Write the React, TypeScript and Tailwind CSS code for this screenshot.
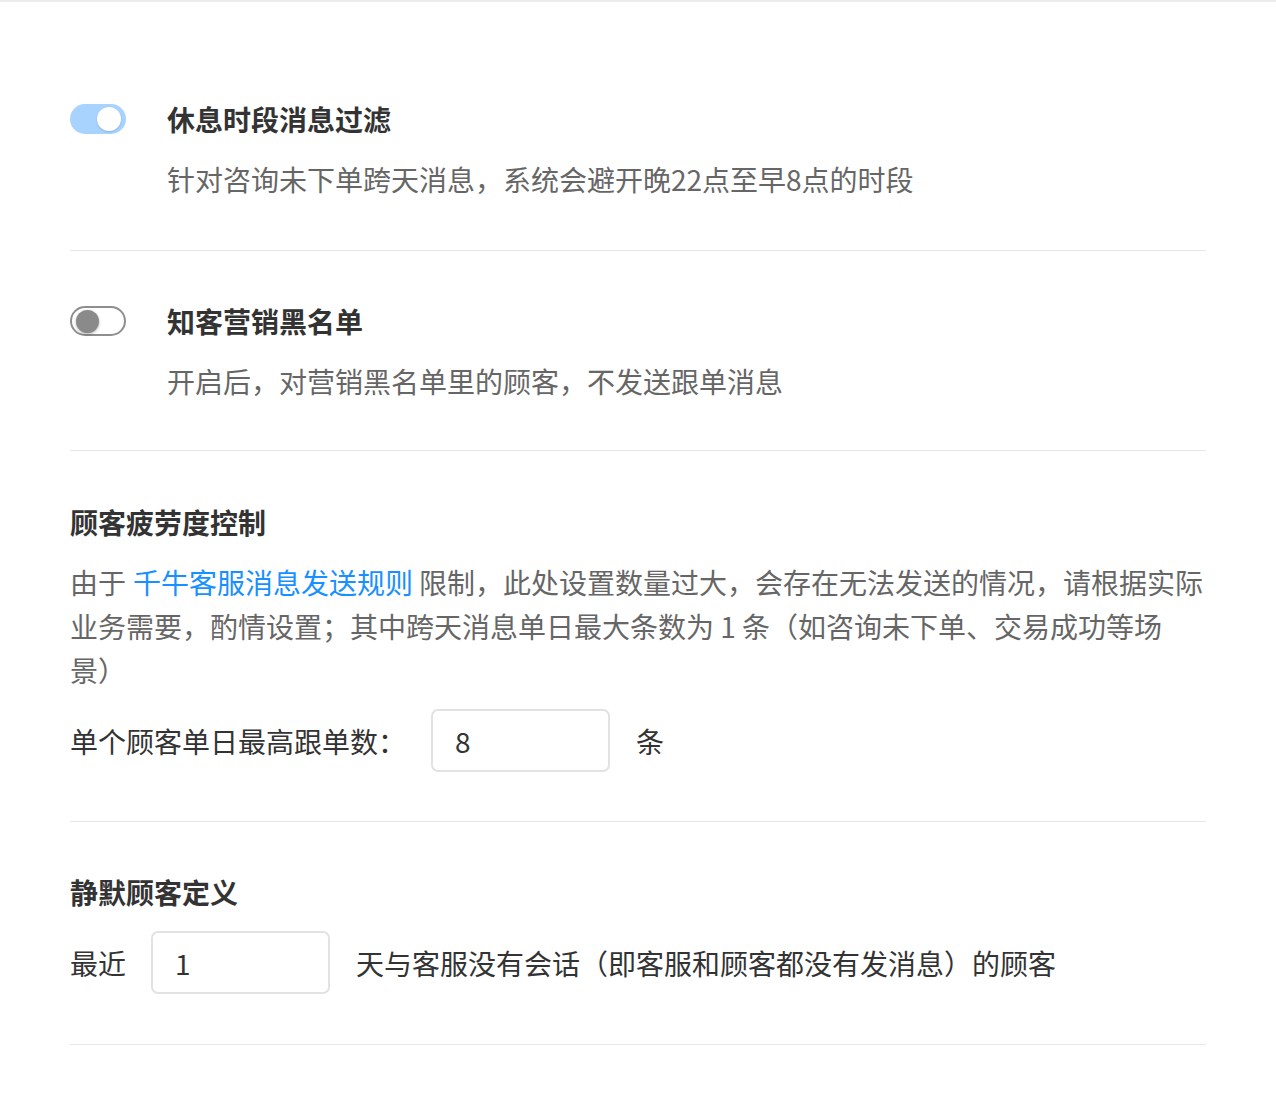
import React from 'react';

const Toggle: React.FC<{ on: boolean }> = ({ on }) => {
  if (on) {
    return (
      <div className="shrink-0 w-[56px] h-[30px] rounded-full bg-[#a8d2ff] flex items-center justify-end px-[5px]">
        <div className="w-[24px] h-[24px] rounded-full bg-white shadow-[0_1px_2px_rgba(0,0,0,0.15)]" />
      </div>
    );
  }
  return (
    <div className="shrink-0 w-[56px] h-[30px] rounded-full bg-white border-2 border-[#8e8e8e] flex items-center px-[4px]">
      <div className="w-[23px] h-[23px] rounded-full bg-[#8a8a8a] shadow-[0_1px_3px_rgba(0,0,0,0.3)]" />
    </div>
  );
};

const ToggleSection: React.FC<{ on: boolean; title: string; desc: string; first?: boolean }> = ({ on, title, desc, first }) => (
  <section className={`${first ? 'pt-[97px] pb-[51px]' : 'pt-[50px] pb-[49px]'} border-b border-[#e8e8e8]`}>
    <div className="flex items-center gap-[41px] h-[40px]">
      <Toggle on={on} />
      <h3 className="text-[28px] leading-[40px] font-bold text-[#333]">{title}</h3>
    </div>
    <p className="mt-[20px] pl-[97px] text-[28px] leading-[40px] text-[#666]">{desc}</p>
  </section>
);

const NumberBox: React.FC<{ value: string }> = ({ value }) => (
  <div className="shrink-0 w-[179px] h-[63px] rounded-[7px] border-2 border-[#e2e2e2] flex items-center pl-[22px] text-[28px] text-[#333]">
    {value}
  </div>
);

export default function App() {
  return (
    <div
      className="w-[1276px] min-h-[1106px] bg-white border-t-2 border-[#ececec] px-[70px]"
      style={{ fontFamily: '"Noto Sans CJK SC", "Noto Sans", sans-serif' }}
    >
      <ToggleSection
        first
        on
        title="休息时段消息过滤"
        desc="针对咨询未下单跨天消息，系统会避开晚22点至早8点的时段"
      />
      <ToggleSection
        on={false}
        title="知客营销黑名单"
        desc="开启后，对营销黑名单里的顾客，不发送跟单消息"
      />

      {/* fatigue control */}
      <section className="pt-[51px] pb-[49px] border-b border-[#e8e8e8]">
        <h3 className="text-[28px] leading-[40px] font-bold text-[#333]">顾客疲劳度控制</h3>
        <p className="mt-[18px] text-[28px] leading-[44px] text-[#666]">
          由于<span className="ml-[7px] mr-[6px] text-[#1890ff]">千牛客服消息发送规则</span>限制，此处设置数量过大，会存在无法发送的情况，请根据实际<br />业务需要，酌情设置；其中跨天消息单日最大条数为 1 条（如咨询未下单、交易成功等场<br />景）
        </p>
        <div className="mt-[17px] flex items-center text-[28px] text-[#333]">
          <span>单个顾客单日最高跟单数：</span>
          <div className="ml-[25px]">
            <NumberBox value="8" />
          </div>
          <span className="ml-[26px]">条</span>
        </div>
      </section>

      {/* silent customer */}
      <section className="pt-[50px] pb-[50px] border-b border-[#e8e8e8]">
        <h3 className="text-[28px] leading-[40px] font-bold text-[#333]">静默顾客定义</h3>
        <div className="mt-[19px] flex items-center text-[28px] text-[#333]">
          <span>最近</span>
          <div className="ml-[25px]">
            <NumberBox value="1" />
          </div>
          <span className="ml-[26px]">天与客服没有会话（即客服和顾客都没有发消息）的顾客</span>
        </div>
      </section>
    </div>
  );
}
